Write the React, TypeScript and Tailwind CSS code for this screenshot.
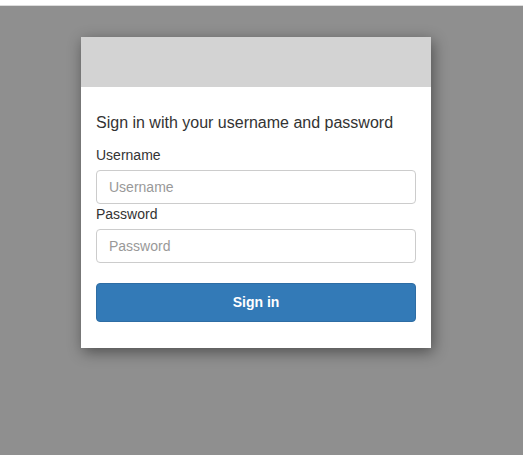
export default function App() {
  return (
    <div className="min-h-[455px] w-full bg-[#8f8f8f] font-['Liberation_Sans',Arial,sans-serif] text-[#333]">
      <div className="h-[6px] bg-white border-b border-[#dcdcdc]" />
      <div className="pt-[31px] pl-[81px]">
        <div className="w-[350px] bg-white shadow-[2px_4px_14px_rgba(0,0,0,0.45)]">
          <div className="h-[50px] bg-[#d3d3d3]" />
          <form className="px-[15px] pt-[24px] pb-[26px]" onSubmit={(e) => e.preventDefault()}>
            <h1 className="text-[16px] leading-[23px] mb-[11px]">
              Sign in with your username and password
            </h1>
            <label htmlFor="username" className="block text-[14px] leading-[20px] mb-[5px]">
              Username
            </label>
            <input
              id="username"
              placeholder="Username"
              className="block w-full h-[34px] px-[12px] text-[14px] border border-[#ccc] rounded-[4px] placeholder:text-[#999] outline-none"
            />
            <label htmlFor="password" className="block text-[14px] leading-[20px] mb-[5px]">
              Password
            </label>
            <input
              id="password"
              type="password"
              placeholder="Password"
              className="block w-full h-[34px] px-[12px] text-[14px] border border-[#ccc] rounded-[4px] placeholder:text-[#999] outline-none"
            />
            <button
              type="submit"
              className="mt-[20px] w-full h-[39px] rounded-[4px] bg-[#337ab7] border border-[#2e6da4] text-white text-[14px] font-bold"
            >
              Sign in
            </button>
          </form>
        </div>
      </div>
    </div>
  );
}
